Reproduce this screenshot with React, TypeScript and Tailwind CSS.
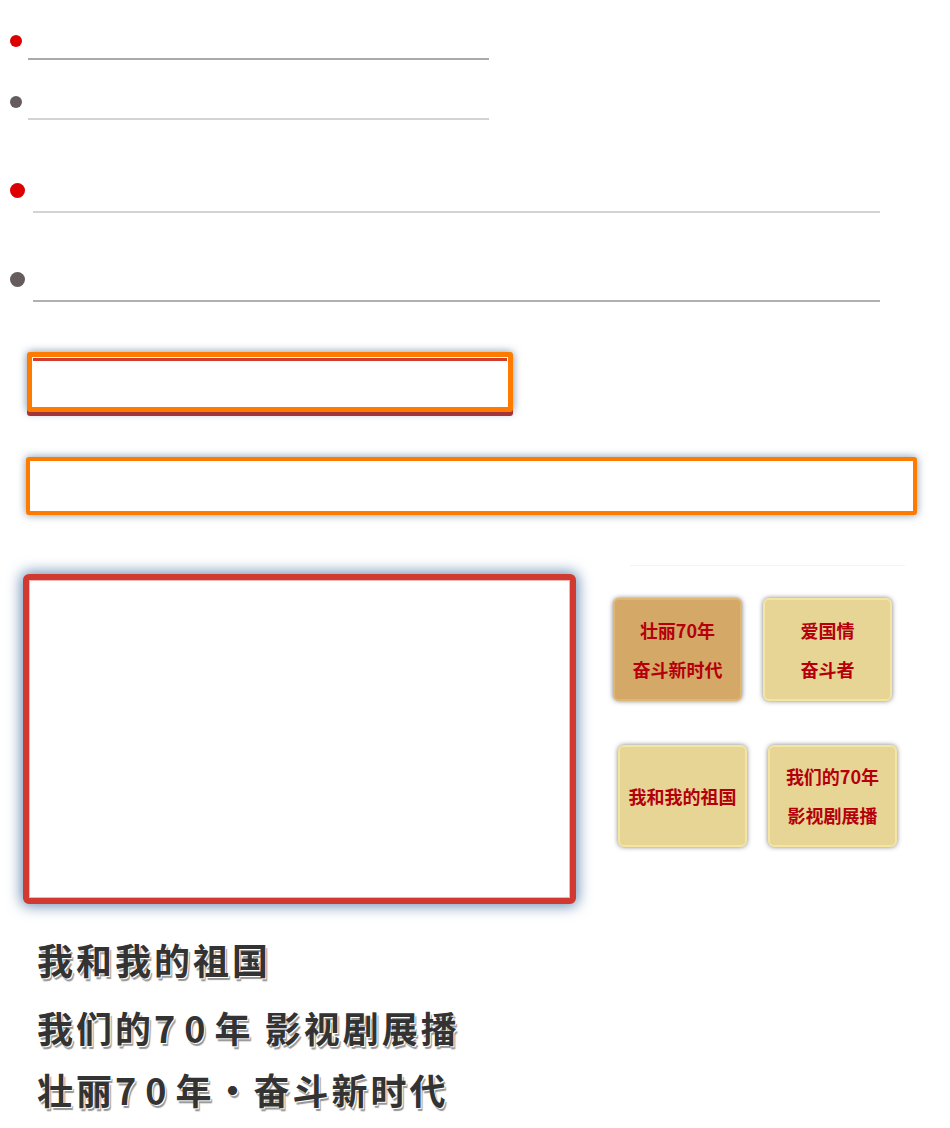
import React from "react";

const tiles = [
  { lines: ["壮丽70年", "奋斗新时代"], active: true },
  { lines: ["爱国情", "奋斗者"], active: false },
];

const tiles2 = [
  { lines: ["我和我的祖国"], active: false },
  { lines: ["我们的70年", "影视剧展播"], active: false },
];

function Tile({ lines, active, tall }: { lines: string[]; active: boolean; tall?: boolean }) {
  return (
    <div
      className={`w-[129px] ${tall ? "h-[103px]" : "h-[102px]"} flex flex-col items-center justify-center rounded-[6px] border-2 shadow-[0_0_5px_rgba(0,0,0,0.5)] ${
        active ? "bg-[#d4a866] border-[#e0b671]" : "bg-[#e6d595] border-[#f4e6a1]"
      }`}
    >
      {lines.map((l) => (
        <span key={l} className="text-[18px] leading-[39px] font-bold text-[#b5000b]">
          {l}
        </span>
      ))}
    </div>
  );
}

export default function App() {
  const title = "text-[36px] leading-[62px] font-bold tracking-[3px] text-[#333333] [text-shadow:1px_1px_0_#fff,2px_3px_1px_#959595]";
  const num = "tracking-[9px]";

  return (
    <div className="w-[950px] min-h-[1128px] bg-white overflow-hidden font-['Noto_Sans_CJK_SC',sans-serif]">
      {/* liste courte */}
      <ul className="w-[489px]">
        <li className="flex h-[60px]">
          <span className="ml-[10px] mt-[35px] w-3 h-3 rounded-full bg-[#dd0000] shrink-0" />
          <div className="ml-[6px] flex-1 border-b-2 border-[#aaaaaa]" />
        </li>
        <li className="flex h-[60px]">
          <span className="ml-[10px] mt-[36px] w-3 h-3 rounded-full bg-[#655d5d] shrink-0" />
          <div className="ml-[6px] flex-1 border-b-2 border-[#d3d3d3]" />
        </li>
      </ul>

      {/* liste large */}
      <ul className="w-[880px] mt-[4px]">
        <li className="flex h-[89px]">
          <span className="ml-[10px] mt-[59px] w-[15px] h-[15px] rounded-full bg-[#dd0000] shrink-0" />
          <div className="ml-[8px] flex-1 border-b-2 border-[#d3d3d3]" />
        </li>
        <li className="flex h-[89px]">
          <span className="ml-[10px] mt-[59px] w-[15px] h-[15px] rounded-full bg-[#655d5d] shrink-0" />
          <div className="ml-[8px] flex-1 border-b-2 border-[#b0b0b0]" />
        </li>
      </ul>

      {/* cadres orange */}
      <div className="ml-[27px] mt-[50px] w-[486px] h-[60px] rounded-[3px] border-[5px] border-[#ff7b00] bg-white shadow-[0_4px_0_#a3353a,0_0_9px_rgba(50,80,110,0.65)]">
        <div className="mt-px mx-px h-[3px] bg-[#d23c2c]" />
      </div>
      <div className="ml-[26px] mt-[45px] w-[891px] h-[58px] rounded-[3px] border-4 border-[#ff7b00] bg-white shadow-[0_0_8px_rgba(50,80,110,0.6)]" />

      {/* bloc principal */}
      <div className="flex mt-[50px]">
        <div className="ml-[23px] mt-[9px] w-[553px] h-[330px] rounded-[6px] border-[6px] border-[#d13a31] bg-white shadow-[0_0_14px_2px_rgba(70,115,160,0.8)]">
          <div className="h-full border border-[#eeb6b1]" />
        </div>
        <div className="ml-[37px]">
          <div className="ml-[17px] w-[275px] h-px bg-[#f3f3f3]" />
          <div className="mt-[32px] flex gap-[21px]">
            {tiles.map((t) => (
              <Tile key={t.lines[0]} lines={t.lines} active={t.active} tall />
            ))}
          </div>
          <div className="mt-[44px] ml-[5px] flex gap-[21px]">
            {tiles2.map((t) => (
              <Tile key={t.lines[0]} lines={t.lines} active={t.active} />
            ))}
          </div>
        </div>
      </div>

      {/* titres */}
      <div className="mt-[24px] pl-[37px]">
        <p className={`${title} mb-[6px]`}>我和我的祖国</p>
        <p className={title}>
          我们的<span className={num}>70</span>年 影视剧展播
        </p>
        <p className={title}>
          壮丽<span className={num}>70</span>年・奋斗新时代
        </p>
      </div>
    </div>
  );
}
